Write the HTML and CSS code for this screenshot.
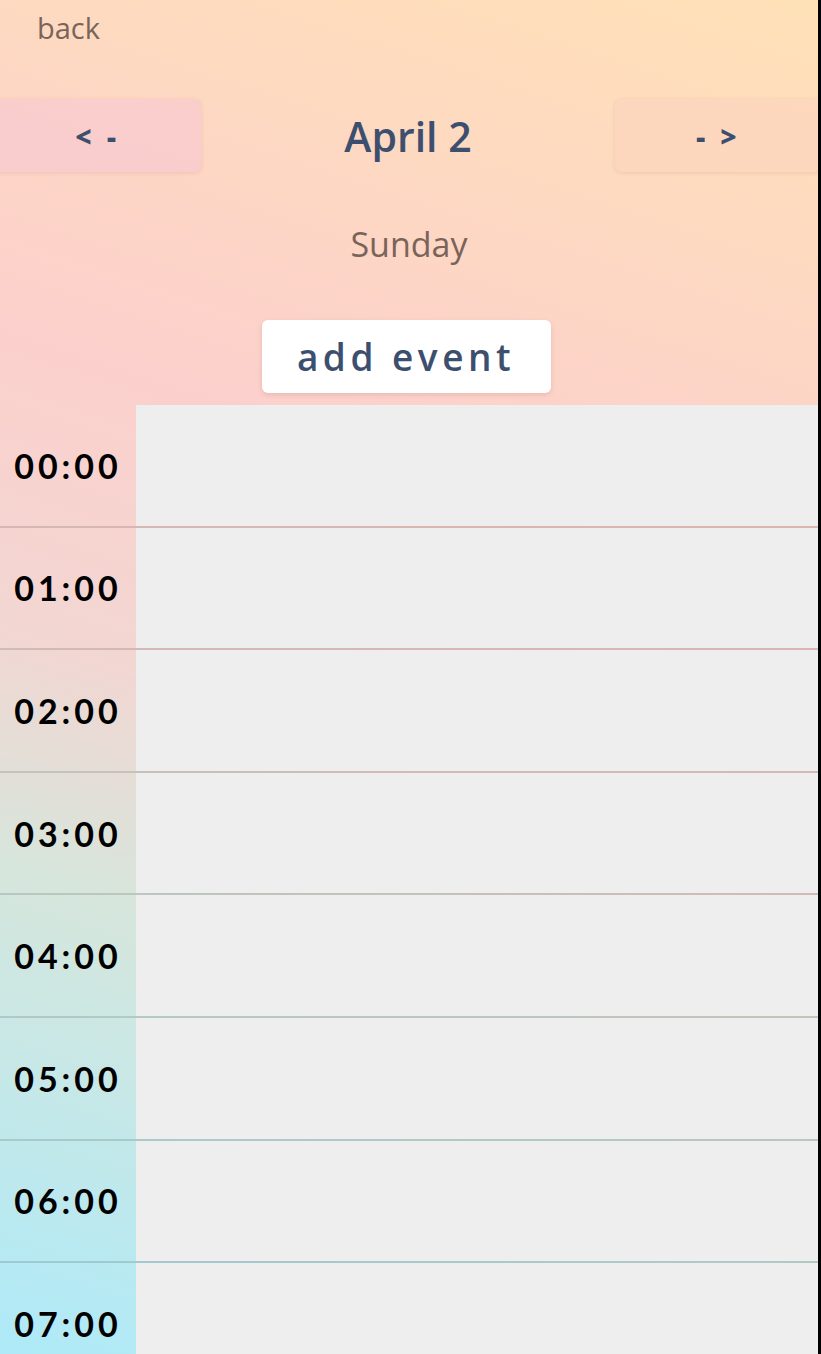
FILE: index.html
```html
<!DOCTYPE html>
<html lang="en">
<head>
  <meta charset="UTF-8">
  <meta name="viewport" content="width=device-width, initial-scale=1.0">
  <title>Day</title>
  <link rel="stylesheet" href="styles.css">
</head>
<body>
  <div class="page">
    <a class="back" href="#">back</a>

    <!-- навигация по дням -->
    <div class="nav">
      <button class="nav-btn prev">&lt; -</button>
      <h1 class="date">April 2</h1>
      <button class="nav-btn next">- &gt;</button>
    </div>

    <h2 class="weekday">Sunday</h2>

    <div class="actions">
      <button class="add-btn">add event</button>
    </div>

    <!-- расписание -->
    <div class="schedule">
      <div class="row"><div class="time">00:00</div><div class="slot"></div></div>
      <div class="row"><div class="time">01:00</div><div class="slot"></div></div>
      <div class="row"><div class="time">02:00</div><div class="slot"></div></div>
      <div class="row"><div class="time">03:00</div><div class="slot"></div></div>
      <div class="row"><div class="time">04:00</div><div class="slot"></div></div>
      <div class="row"><div class="time">05:00</div><div class="slot"></div></div>
      <div class="row"><div class="time">06:00</div><div class="slot"></div></div>
      <div class="row"><div class="time">07:00</div><div class="slot"></div></div>
    </div>
  </div>
</body>
</html>
```

FILE: styles.css
```css
html {
  background-color: #000;
}
body {
  margin: 0;
  width: 818px;
  height: 1354px;
  overflow: hidden;
  font-family: "Open Sans", "Noto Sans", sans-serif;
  background: linear-gradient(18deg, #aeeaf8 0%, #d6e6dc 30%, #f2d6d2 45%, #fcd0cc 64%, #ffe1b7 100%);
}
.page {
  display: flex;
  flex-direction: column;
}
.back {
  display: block;
  margin: 8px 0 0 37px;
  font-size: 29px;
  color: #7a6459;
  text-decoration: none;
  line-height: 40px;
}
.nav {
  display: flex;
  justify-content: space-between;
  align-items: center;
  margin-top: 51px;
}
.nav-btn {
  width: 207px;
  height: 73px;
  border: none;
  border-radius: 7px;
  font-family: inherit;
  font-size: 28px;
  font-weight: 800;
  color: #3d4f6e;
  letter-spacing: 4px;
  box-shadow: 0 1px 4px rgba(120, 60, 60, 0.12);
  cursor: pointer;
}
.nav-btn.prev {
  margin-left: -6px;
  background-color: rgba(244, 196, 214, 0.45);
}
.nav-btn.next {
  margin-right: -4px;
  background-color: rgba(252, 210, 190, 0.5);
}
.date {
  margin: 0;
  font-size: 41px;
  font-weight: 600;
  color: #3d4f6e;
}
.weekday {
  margin: 50px 0 0;
  text-align: center;
  font-size: 34px;
  font-weight: 500;
  color: #7a6459;
  line-height: 44px;
}
.actions {
  display: flex;
  justify-content: center;
  margin-top: 54px;
  padding-right: 6px;
}
.add-btn {
  width: 289px;
  height: 73px;
  background-color: #fff;
  border: none;
  border-radius: 6px;
  box-shadow: 0 2px 5px rgba(120, 60, 60, 0.15);
  font-family: inherit;
  font-size: 37px;
  font-weight: 600;
  letter-spacing: 4.5px;
  color: #3d4f6e;
  cursor: pointer;
}
.schedule {
  margin-top: 12px;
}
.row {
  display: grid;
  grid-template-columns: 136px 1fr;
  height: 120.6px;
  border-bottom: 2px solid rgba(0, 0, 0, 0.13);
}
.time {
  display: flex;
  align-items: center;
  justify-content: center;
  font-family: "Lato", sans-serif;
  font-size: 34px;
  font-weight: 700;
  letter-spacing: 4px;
  color: #000;
}
.slot {
  background-color: #eeeeee;
}
```
